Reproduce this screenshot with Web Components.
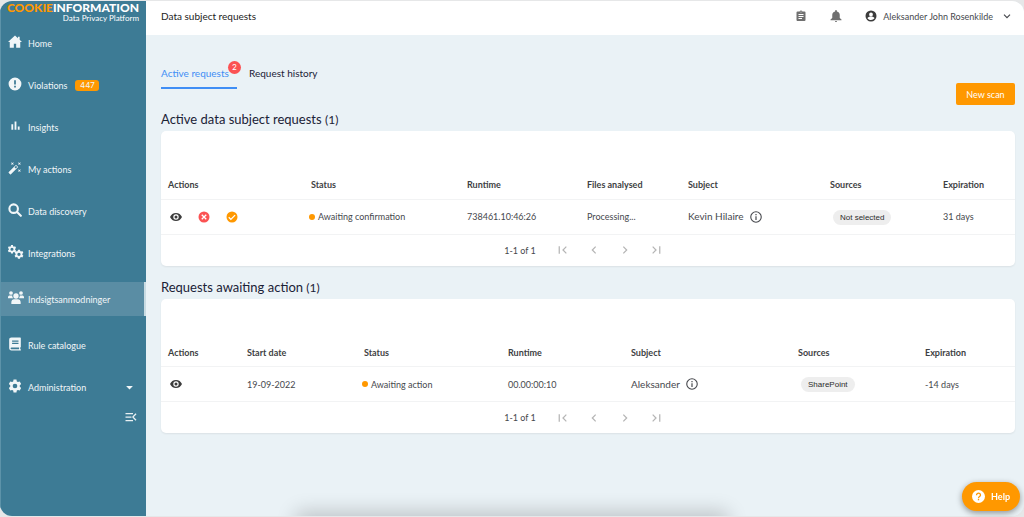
<!DOCTYPE html>
<html lang="en">
<head>
<meta charset="utf-8">
<title>Data subject requests</title>
<style>
  html, body { margin: 0; min-height: 100%; background: #e6e7e8; }
  body { font-family: Lato, "Open Sans", sans-serif; font-size: 9px; line-height: 15px; color: #46484d; }
</style>
</head>
<body>
<privacy-app></privacy-app>
<script>
const icons = {
  home: '<path d="M12 1 0 12h3v10h7v-7h4v7h7V12h3l-4-3.700V3h-3v2.600z"/>',
  alert: '<path fill-rule="evenodd" d="M12 1a11 11 0 1 0 0 22 11 11 0 0 0 0-22zm1.500 17h-3v-3h3zm0-5h-3V5.500h3z"/>',
  bars: '<path d="M3 9h4v12H3zM10 3h4v18h-4zM17 14h4v7h-4z"/>',
  wand: '<path d="M7.500 5.600 10 7 8.600 4.500 10 2 7.500 3.400 5 2l1.400 2.500L5 7zm12 9.800L17 14l1.400 2.500L17 19l2.500-1.400L22 19l-1.400-2.500L22 14zM22 2l-2.500 1.400L17 2l1.400 2.500L17 7l2.500-1.400L22 7l-1.400-2.500zm-7.600 5.300a1 1 0 0 0-1.400 0L1.300 19a1 1 0 0 0 0 1.400l2.300 2.300a1 1 0 0 0 1.400 0L16.700 11a1 1 0 0 0 0-1.400zm-1 5.500-2.200-2.200 2.400-2.400 2.200 2.200z"/>',
  search: '<path fill="none" stroke="currentColor" stroke-width="3.600" stroke-linecap="round" d="M15.500 15.500 22 22M17 9.700a7.300 7.300 0 1 1-14.600 0 7.300 7.300 0 0 1 14.600 0z"/>',
  gear: '<path fill-rule="evenodd" d="m9.500 1-.6 3.100-2 1.200-3-1.100-2.500 4.300 2.400 2.100v2.800l-2.400 2.100 2.500 4.300 3-1.100 2 1.200.6 3.100h5l.6-3.100 2-1.200 3 1.100 2.500-4.300-2.400-2.100v-2.800l2.400-2.100-2.500-4.300-3 1.100-2-1.200-.6-3.100zM12 8a4 4 0 1 1 0 8 4 4 0 0 1 0-8z"/>',
  people: '<circle cx="12" cy="9" r="4"/><circle cx="4.500" cy="4.500" r="2.800"/><circle cx="19.500" cy="4.500" r="2.800"/><path d="M5 21v-2.500c0-3 2-4.500 4-4.500h6c2 0 4 1.500 4 4.500V21zM0 12.500V11c0-2 1.200-2.800 3-2.800h3.200c.2 2 .6 3 1.800 4.300zM24 12.500V11c0-2-1.200-2.800-3-2.800h-3.200c-.2 2-.6 3-1.800 4.300z"/>',
  book: '<path fill-rule="evenodd" d="M6 1h15a1 1 0 0 1 1 1v15l-1 1v3h1v2H6c-2.500 0-4-1.500-4-4V5c0-2.500 1.500-4 4-4zm1 5v2h11V6zm0 4v2h11v-2zm-1 8c-2 0-2 3 0 3h13v-3z"/>',
  caret: '<path d="m3 8 9 9 9-9z"/>',
  collapse: '<path d="M1 4h15v2.500H1zM1 11h12v2.500H1zM1 18h15v2.500H1zM23 6.500 17.500 12l5.500 5.500-2 1.800L14 12l7-7.300z"/>',
  clipboard: '<path fill-rule="evenodd" d="M19 3h-4.200a3 3 0 0 0-5.600 0H5a2 2 0 0 0-2 2v15a2 2 0 0 0 2 2h14a2 2 0 0 0 2-2V5a2 2 0 0 0-2-2zm-7 0a1 1 0 1 1 0 2 1 1 0 0 1 0-2zm2 15H7v-2h7zm3-4H7v-2h10zm0-4H7V8h10z"/>',
  bell: '<path d="M12 24a2.300 2.300 0 0 0 2.300-2.200H9.700A2.300 2.300 0 0 0 12 24zm7.500-8v-6c0-3.600-2-6.300-5.700-7V2a1.800 1.800 0 0 0-3.600 0v1C6.500 3.700 4.500 6.400 4.500 10v6L1 19v1.500h22V19z"/>',
  user: '<path fill-rule="evenodd" d="M12 1a11 11 0 1 0 0 22 11 11 0 0 0 0-22zm0 4a3.800 3.800 0 1 1 0 7.600A3.800 3.800 0 0 1 12 5zm0 15c-3 0-5.500-1.500-7-3.600 0-2.200 4.700-3.400 7-3.400s7 1.200 7 3.400A8.500 8.500 0 0 1 12 20z"/>',
  down: '<path fill="none" stroke="currentColor" stroke-width="3.500" d="m3 8 9 9 9-9"/>',
  eye: '<path fill-rule="evenodd" d="M12 4C6.500 4 2 7.300 0 12c2 4.700 6.500 8 12 8s10-3.300 12-8c-2-4.700-6.500-8-12-8zm0 2.600a5.400 5.400 0 1 1 0 10.800 5.400 5.400 0 0 1 0-10.800zM12 9a3 3 0 1 0 0 6 3 3 0 0 0 0-6z"/>',
  cross: '<circle cx="12" cy="12" r="11"/><path stroke="#fff" stroke-width="2.600" d="m7.500 7.500 9 9m0-9-9 9"/>',
  check: '<circle cx="12" cy="12" r="11"/><path fill="none" stroke="#fff" stroke-width="2.600" d="m5.500 12.500 4.200 4.200 8.500-8.500"/>',
  info: '<circle cx="12" cy="12" r="10.500" fill="none" stroke="currentColor" stroke-width="2.200"/><path d="M10.800 10.500h2.400V18h-2.400zM10.800 6h2.400v2.500h-2.400z"/>',
  first: '<path fill="none" stroke="currentColor" stroke-width="3" d="M3 3v18M20 4l-8 8 8 8"/>',
  prev: '<path fill="none" stroke="currentColor" stroke-width="3" d="m16 4-8 8 8 8"/>',
  next: '<path fill="none" stroke="currentColor" stroke-width="3" d="m8 4 8 8-8 8"/>',
  last: '<path fill="none" stroke="currentColor" stroke-width="3" d="M21 3v18M4 4l8 8-8 8"/>',
  help: '<circle cx="12" cy="12" r="12"/><path fill="none" stroke="#ff9800" stroke-width="2.300" d="M8.300 9.500C8.300 4.500 16 5 15.700 9.500c-.2 2.500-3.700 2.700-3.700 5.500"/><path fill="#ff9800" d="M10.800 16.500h2.400V19h-2.400z"/>'
};
icons.gears = '<g transform="translate(-1 1) scale(.58)">' + icons.gear + '</g><g transform="translate(9 8) scale(.62)">' + icons.gear + '</g>';

const reset = `
  *, *::before { box-sizing: border-box; }
  button { font: inherit; color: inherit; background: none; border: 0; padding: 0; margin: 0; cursor: pointer; }
  a { color: inherit; text-decoration: none; }
`;

function define(name, markup, setup) {
  const template = document.createElement('template');
  template.innerHTML = markup;
  customElements.define(name, class extends HTMLElement {
    connectedCallback() {
      if (this.shadowRoot) return;
      const root = this.attachShadow({ mode: 'open' });
      root.append(template.content.cloneNode(true));
      if (setup) setup(this, root);
    }
  });
}

define('ui-icon', `
  <style>
    :host { display: inline-flex; flex: none; width: var(--size, 12px); height: var(--size, 12px); }
    svg { width: 100%; height: 100%; fill: currentColor; }
  </style>
  <svg viewBox="0 0 24 24" aria-hidden="true"></svg>`,
  (el, root) => { root.querySelector('svg').innerHTML = icons[el.getAttribute('name')]; });

define('side-bar', `
  <style>${reset}
    :host { display: flex; flex-direction: column; width: 146px; flex: none; background: #3d7b95; border-left: 1px solid #5d93a9; }
    .brand { padding: 0 7px 0 5px; text-align: right; color: #fff; height: 21px; white-space: nowrap; }
    .name { font: 900 12px/13px Lato, sans-serif; }
    .name b { color: #ff9800; font-weight: inherit; }
    .tag { font: 8px/8px Lato, sans-serif; }
    nav { display: block; }
    a { display: grid; grid-template-columns: 20px auto 1fr; align-items: center; height: 42px; padding: 0 12px 0 7px; color: #f1f6f8; }
    a.active { margin: 8px 0; height: 34px; background: #5a8da4; border-right: 2px solid #c9dbe2; }
    a > ui-icon { --size: 14px; margin-bottom: 3px; }
    a > ui-icon.small { --size: 11px; margin-left: 2px; }
    a > ui-icon.wide { --size: 16px; }
    a > ui-icon.caret { --size: 9px; justify-self: end; margin: 0; }
    .count { justify-self: start; margin-left: 8px; width: 24px; height: 11px; border-radius: 3px; background: #ff9800; text-align: center; font: 8px/11px Inter, sans-serif; }
    .fold { align-self: flex-end; margin-right: 9px; display: flex; color: #e8f0f3; height: 18px; align-items: center; }
  </style>
  <div class="brand"><div class="name"><b>COOKIE</b>INFORMATION</div><div class="tag">Data Privacy Platform</div></div>
  <nav>
    <a href="#"><ui-icon name="home"></ui-icon><span>Home</span></a>
    <a href="#"><ui-icon name="alert"></ui-icon><span>Violations</span><span class="count">447</span></a>
    <a href="#"><ui-icon name="bars" class="small"></ui-icon><span>Insights</span></a>
    <a href="#"><ui-icon name="wand"></ui-icon><span>My actions</span></a>
    <a href="#"><ui-icon name="search"></ui-icon><span>Data discovery</span></a>
    <a href="#"><ui-icon name="gears" class="wide"></ui-icon><span>Integrations</span></a>
    <a href="#" class="active"><ui-icon name="people" class="wide"></ui-icon><span>Indsigtsanmodninger</span></a>
    <a href="#"><ui-icon name="book"></ui-icon><span>Rule catalogue</span></a>
    <a href="#"><ui-icon name="gear"></ui-icon><span>Administration</span><ui-icon name="caret" class="caret"></ui-icon></a>
  </nav>
  <button class="fold" aria-label="Collapse menu"><ui-icon name="collapse"></ui-icon></button>`);

define('top-bar', `
  <style>${reset}
    :host { display: flex; align-items: center; height: 34px; padding: 0 13px 4px 15px; background: #fff; }
    h1 { margin: 0 auto 0 0; font: 10px/16px Lato, sans-serif; color: #1c1c22; }
    button { display: flex; align-items: center; }
    .tool { width: 35px; color: #707070; }
    .user { gap: 6px; }
    .user ui-icon:first-child { color: #3c3c3c; }
    .user ui-icon:last-child { --size: 8px; margin-left: 4px; }
  </style>
  <h1>Data subject requests</h1>
  <button class="tool" aria-label="Tasks"><ui-icon name="clipboard"></ui-icon></button>
  <button class="tool" aria-label="Notifications"><ui-icon name="bell"></ui-icon></button>
  <button class="user"><ui-icon name="user"></ui-icon><span>Aleksander John Rosenkilde</span><ui-icon name="down"></ui-icon></button>`);

define('request-tabs', `
  <style>${reset}
    :host { display: flex; gap: 12px; color: #1b2236; font-size: 10px; }
    button { position: relative; height: 30px; padding-bottom: 2px; }
    .on { width: 76px; text-align: left; color: #3f8ef5; border-bottom: 2px solid #3f8ef5; padding-bottom: 0; }
    .dot { position: absolute; top: 2px; right: -4px; width: 13px; height: 13px; border-radius: 50%; background: #fb5253; color: #fff; font: 8px/13px Inter, sans-serif; text-align: center; }
  </style>
  <button class="on">Active requests<span class="dot">2</span></button>
  <button>Request history</button>`);

define('status-text', `
  <style>
    :host { display: flex; align-items: center; gap: 3px; margin-left: -2px; }
    i { width: 6px; height: 6px; border-radius: 50%; background: #ff9800; }
  </style><i></i><slot></slot>`);

define('source-chip', `
  <style>
    :host { display: inline-block; margin-left: 3px; padding: 0 7px; border-radius: 8px; background: #eee; color: #2c2c2c; font: 8px/15px "Liberation Sans", sans-serif; vertical-align: middle; }
  </style><slot></slot>`);

define('request-card', `
  <style>${reset}
    :host { display: block; }
    h2 { margin: 0; font: 13px/23px Lato, sans-serif; color: #1b2236; }
    h2 small { font-size: 12px; }
    .card { padding-top: 40px; background: #fff; border-radius: 5px; box-shadow: 0 1px 2px #00000012; }
    table { width: 100%; table-layout: fixed; border-collapse: collapse; text-align: left; }
    th, td { padding: 0 0 0 7px; border-bottom: 1px solid #f2f3f4; white-space: nowrap; }
    th { height: 28px; font-weight: 700; color: #3e3f43; }
    td { height: 35px; }
    .acts, .subject { display: flex; align-items: center; }
    .acts { gap: 16px; padding-left: 2px; }
    .subject { gap: 6px; font-size: 10px; }
    .eye { color: #3c3c3c; } .cross { color: #fb5253; } .check { color: #ff9800; }
    button { display: flex; justify-content: center; }
    footer { display: flex; justify-content: center; align-items: center; height: 31px; }
    footer span { margin-right: 12px; }
    footer button { width: 31px; color: #b5b5b5; }
    footer ui-icon { --size: 10px; }
  </style>
  <h2></h2>
  <div class="card">
    <table><colgroup></colgroup><thead><tr></tr></thead><tbody><tr></tr></tbody></table>
    <footer><span>1-1 of 1</span>
      <button aria-label="First page" disabled><ui-icon name="first"></ui-icon></button>
      <button aria-label="Previous page" disabled><ui-icon name="prev"></ui-icon></button>
      <button aria-label="Next page" disabled><ui-icon name="next"></ui-icon></button>
      <button aria-label="Last page" disabled><ui-icon name="last"></ui-icon></button>
    </footer>
  </div>`,
  (el, root) => {
    const data = tables[el.getAttribute('data')];
    root.querySelector('h2').innerHTML = data.title + ' <small>(1)</small>';
    root.querySelector('colgroup').innerHTML = data.columns.map(c => `<col style="width:${c[1]}px">`).join('');
    root.querySelector('thead tr').innerHTML = data.columns.map(c => `<th scope="col">${c[0]}</th>`).join('');
    root.querySelector('tbody tr').innerHTML = data.columns.map(c => `<td>${c[2]}</td>`).join('');
  });

const action = (name, label) => `<button class="${name}" aria-label="${label}"><ui-icon name="${name}"></ui-icon></button>`;
const subject = name => `<div class="subject">${name}<ui-icon name="info"></ui-icon></div>`;
const tables = {
  active: { title: 'Active data subject requests', columns: [
    ['Actions', 143, `<div class="acts">${action('eye', 'View')}${action('cross', 'Reject')}${action('check', 'Approve')}</div>`],
    ['Status', 156, '<status-text>Awaiting confirmation</status-text>'],
    ['Runtime', 120, '738461.10:46:26'],
    ['Files analysed', 101, 'Processing...'],
    ['Subject', 142, subject('Kevin Hilaire')],
    ['Sources', 113, '<source-chip>Not selected</source-chip>'],
    ['Expiration', 79, '31 days']] },
  awaiting: { title: 'Requests awaiting action', columns: [
    ['Actions', 79, `<div class="acts">${action('eye', 'View')}</div>`],
    ['Start date', 117, '19-09-2022'],
    ['Status', 144, '<status-text>Awaiting action</status-text>'],
    ['Runtime', 123, '00.00:00:10'],
    ['Subject', 167, subject('Aleksander')],
    ['Sources', 127, '<source-chip>SharePoint</source-chip>'],
    ['Expiration', 97, '-14 days']] }
};

define('help-button', `
  <style>${reset}
    :host { position: fixed; right: 4px; bottom: 6px; }
    button { display: flex; align-items: center; gap: 6px; height: 29px; padding: 0 10px; border-radius: 15px; background: #ff9800; color: #fff; font: 700 9px/14px Lato, sans-serif; box-shadow: 0 2px 6px #0006; }
    ui-icon { --size: 13px; }
  </style>
  <button><ui-icon name="help"></ui-icon>Help</button>`);

define('privacy-app', `
  <style>${reset}
    :host { display: block; padding: 1px 0; }
    .window { display: flex; min-height: calc(100vh - 2px); border-radius: 12px; overflow: hidden; background: #eaf2f6; position: relative; }
    .dock { position: absolute; left: 300px; right: 300px; top: 100%; height: 20px; box-shadow: 0 0 20px 4px #0003; }
    .page { flex: 1; min-width: 0; }
    main { padding: 24px 9px 40px 15px; }
    .bar { display: flex; align-items: flex-start; justify-content: space-between; height: 49px; }
    .scan { align-self: flex-end; width: 59px; height: 22px; margin-bottom: 3px; border-radius: 2px; background: #ff9800; color: #fff; }
    request-card + request-card { margin-top: 10px; }
  </style>
  <div class="window">
    <side-bar></side-bar>
    <div class="page">
      <top-bar></top-bar>
      <main>
        <div class="bar"><request-tabs></request-tabs><button class="scan">New scan</button></div>
        <request-card data="active"></request-card>
        <request-card data="awaiting"></request-card>
      </main>
    </div>
    <div class="dock"></div>
  </div>
  <help-button></help-button>`);
</script>
</body>
</html>
